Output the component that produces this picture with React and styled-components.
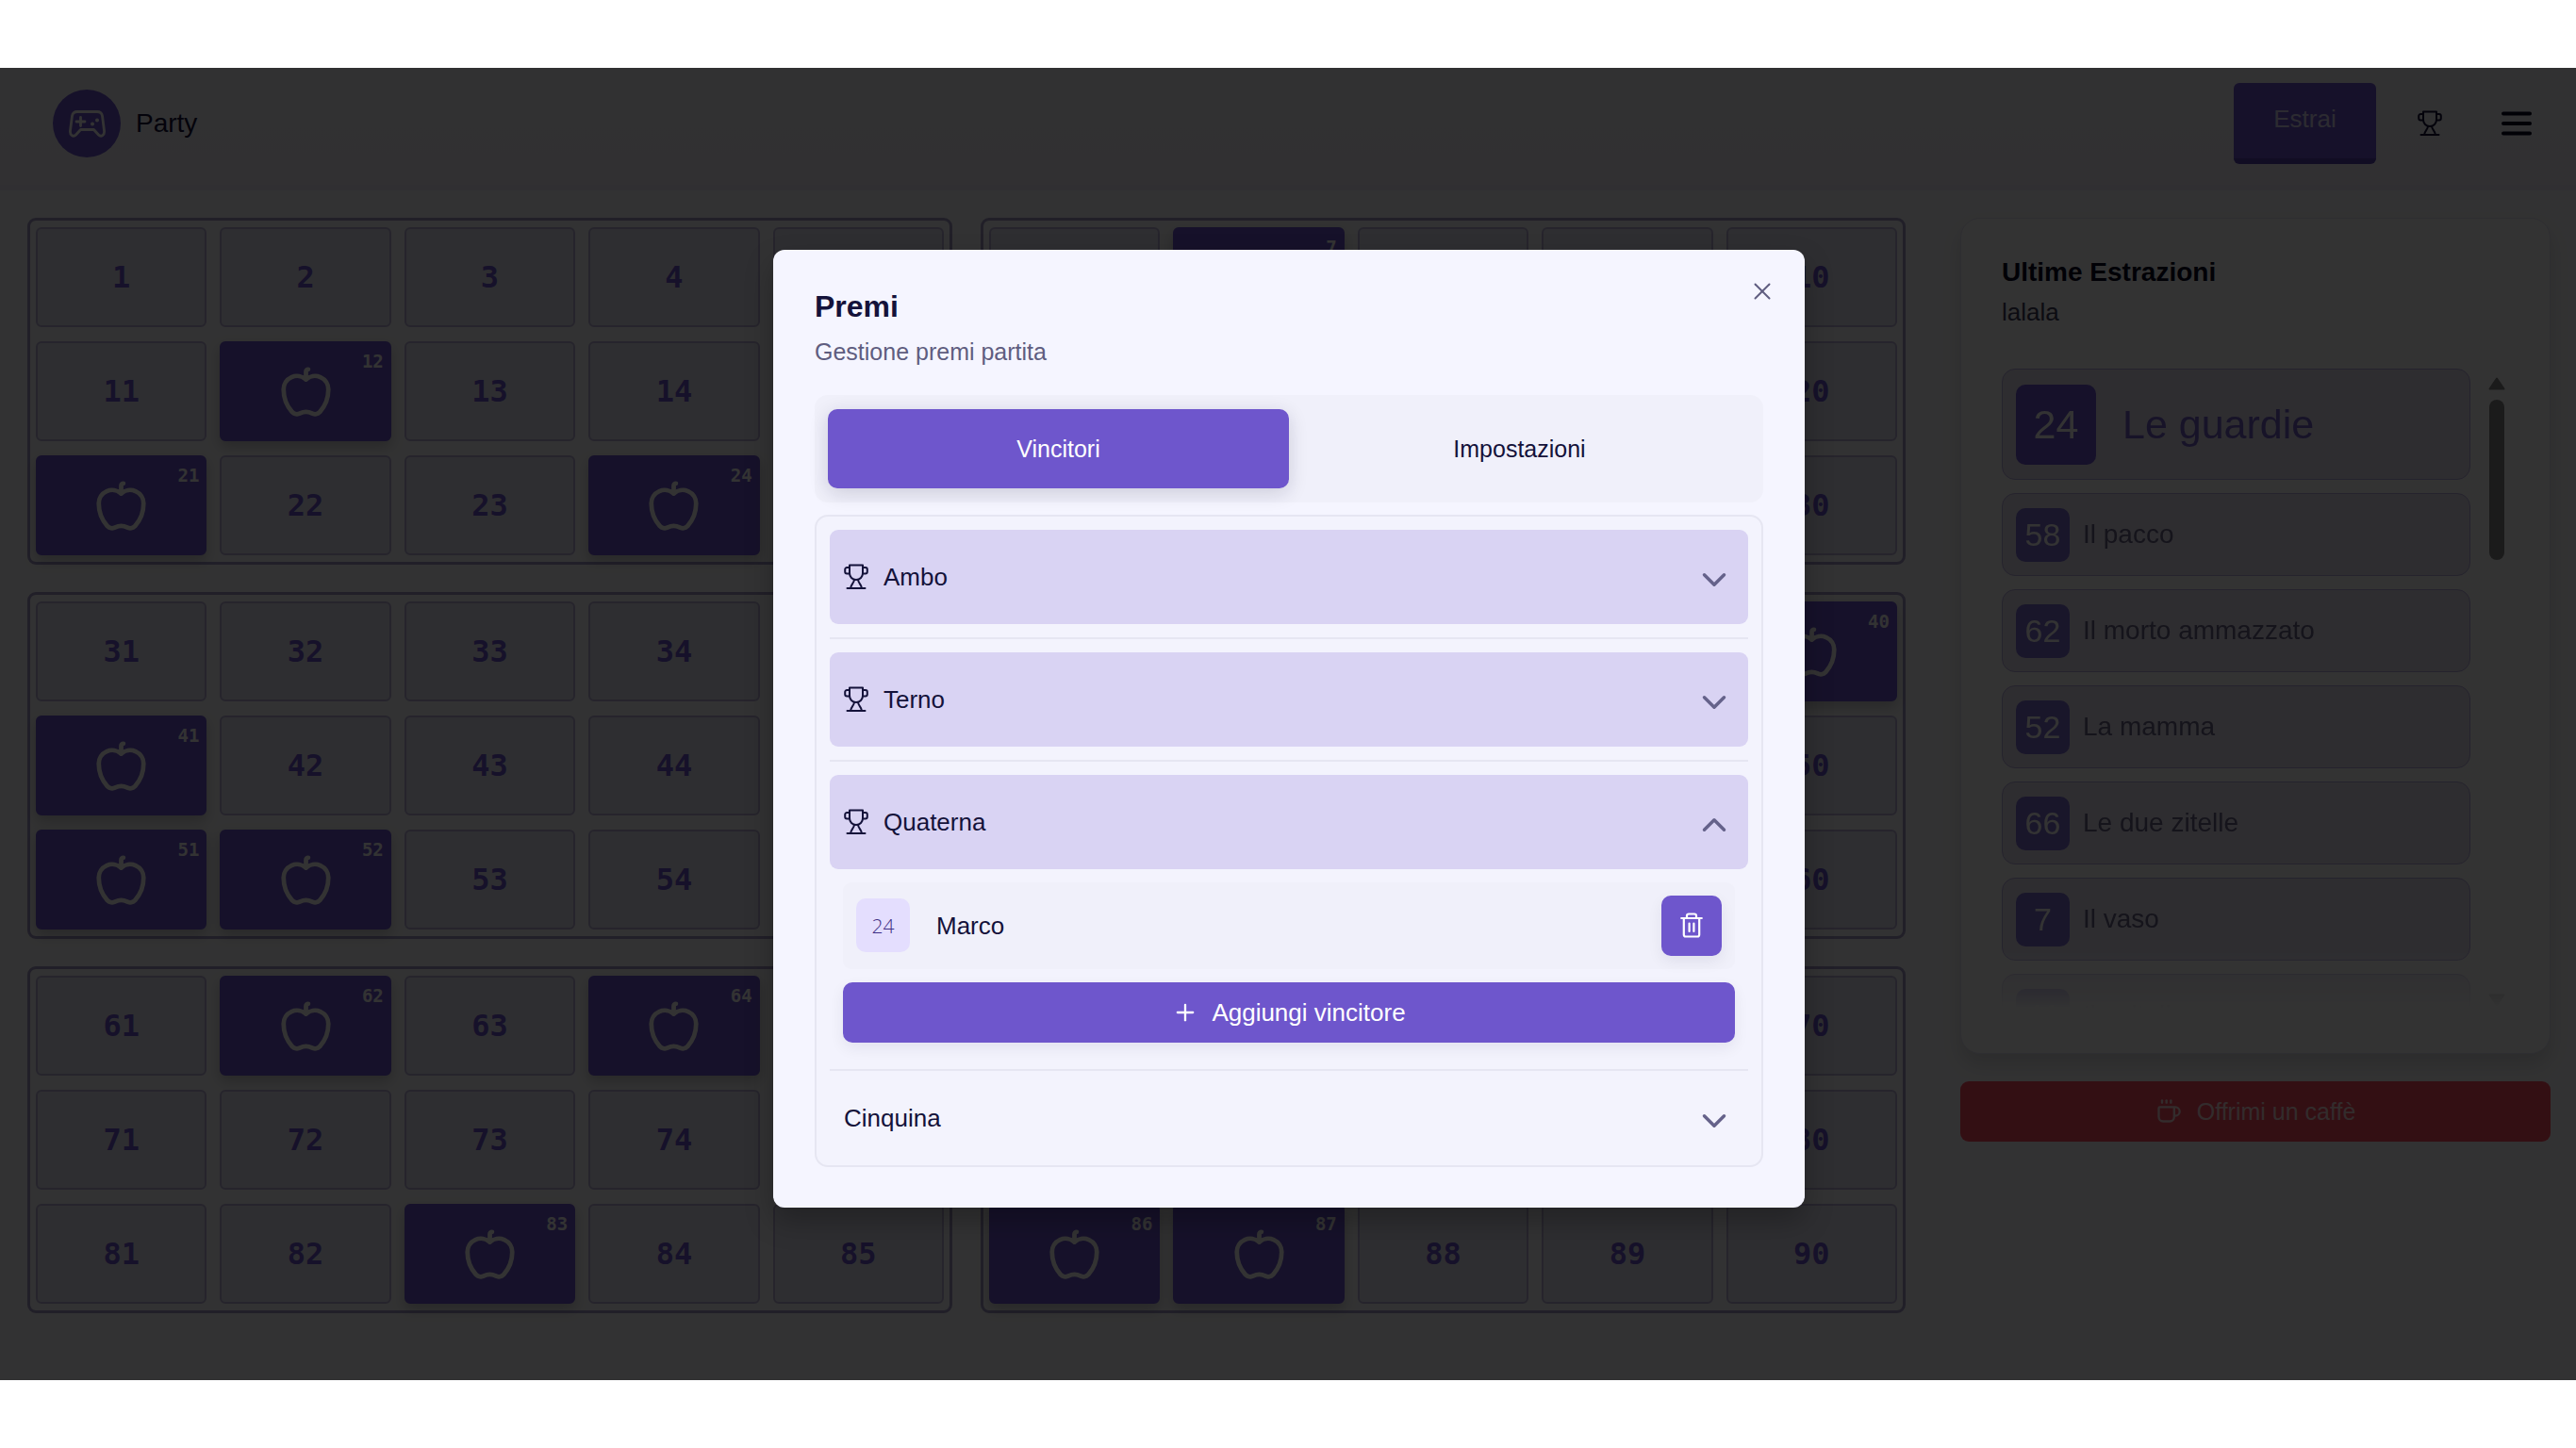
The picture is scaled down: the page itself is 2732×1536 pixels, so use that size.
import React from "react";
import styled, { createGlobalStyle, css } from "styled-components";
import { Apple, ChevronDown, ChevronUp, Coffee, Plus, X } from "lucide-react";

const GlobalStyle = createGlobalStyle`
  *, *::before, *::after { box-sizing: border-box; }
  body {
    margin: 0;
    background: #ffffff;
    color: #14123a;
    font-family: "Liberation Sans", Arial, sans-serif;
    font-size: 26px;
    line-height: 36px;
  }
  h1, h2, h3, p, ul { margin: 0; padding: 0; font-weight: 400; }
  ul { list-style: none; }
  button { font: inherit; color: inherit; border: 0; padding: 0; background: none; cursor: pointer; }
  svg { display: block; flex: none; }
`;

const Frame = styled.div`
  min-height: 100vh;
  padding: 72px 0;
  display: flex;
  flex-direction: column;
`;

const Stage = styled.div`
  position: relative;
  flex: 1;
  background: #fafafc;
`;

const Header = styled.header`
  height: 130px;
  padding: 0 14px 6px 56px;
  display: flex;
  align-items: center;
  justify-content: space-between;
  background: linear-gradient(#f5f4fa, #f2f0fa);
  border-bottom: 6px solid #eeecf8;
`;

const Brand = styled.a`
  display: flex;
  align-items: center;
  gap: 16px;
  font-size: 28px;
  color: #14123a;
  text-decoration: none;
`;

const Logo = styled.span`
  width: 72px;
  height: 72px;
  border-radius: 50%;
  display: grid;
  place-items: center;
  background: #6e56cf;
  color: #ffffff;
`;

const HeaderActions = styled.div`
  display: flex;
  align-items: center;
`;

const DrawButton = styled.button`
  width: 151px;
  height: 86px;
  padding-bottom: 4px;
  margin-right: 14px;
  border-radius: 6px;
  border-bottom: 6px solid #5843ad;
  background: #6e56cf;
  color: #dcd6f5;
`;

const IconButton = styled.button`
  width: ${(p) => p.$width};
  height: 86px;
  border-radius: 11px;
  display: grid;
  place-items: center;
  color: ${(p) => p.$color};
`;

const Main = styled.main`
  padding: 29px 27px 0 29px;
  display: grid;
  grid-template-columns: minmax(0, 1992fr) minmax(0, 626fr);
  gap: 58px;
  align-items: start;
`;

const Board = styled.div`
  display: grid;
  grid-template-columns: 1fr 1fr;
  gap: 29px 30px;
`;

const Card = styled.div`
  padding: 7px 6px;
  border: 3px solid #a39bc8;
  border-radius: 9px;
  display: grid;
  grid-template-columns: repeat(5, minmax(0, 1fr));
  gap: 15px 14px;
`;

const Cell = styled.div`
  position: relative;
  height: 106px;
  border: 2px solid #bcb4dc;
  border-radius: 6px;
  display: grid;
  place-items: center;
  background: #e7e4f2;
  color: #6e56cf;
  font: bold 32px/36px "DejaVu Sans Mono", monospace;
  ${(p) =>
    p.$called &&
    css`
      border-color: #6e56cf;
      background: #6e56cf;
      color: #ffffff;
      box-shadow: 0 6px 14px rgba(0, 0, 0, 0.2);
    `}
`;

const CellTag = styled.span`
  position: absolute;
  top: 8px;
  right: 6px;
  font-size: 19px;
  line-height: 22px;
`;

const Side = styled.aside`
  display: grid;
  gap: 29px;
`;

const Panel = styled.section`
  padding: 41px 43px 43px;
  border: 1px solid #e6e3f5;
  border-radius: 21px;
  background: #ffffff;
  box-shadow: 0 12px 20px rgba(0, 0, 0, 0.12);
`;

const PanelTitle = styled.h2`
  font-size: 28px;
  font-weight: 700;
  line-height: 32px;
  color: #05051e;
`;

const PanelText = styled.p`
  margin: 8px 0 42px;
  color: #3f3d5c;
`;

const ScrollPane = styled.div`
  height: 683px;
  overflow: hidden;
  display: flex;
  justify-content: space-between;
  mask-image: linear-gradient(#000 calc(100% - 70px), transparent calc(100% - 4px));
`;

const DrawList = styled.ul`
  flex: 1;
  margin-right: 19px;
`;

const DrawItem = styled.li`
  height: ${(p) => (p.$latest ? "118px" : "88px")};
  margin-bottom: 14px;
  padding: 0 14px;
  border: 1px solid #b9addf;
  border-radius: 14px;
  display: flex;
  align-items: center;
  gap: ${(p) => (p.$latest ? "28px" : "14px")};
  background: #e3dff0;
  color: ${(p) => (p.$latest ? "#7560c8" : "#6a6387")};
  font-size: ${(p) => (p.$latest ? "43px" : "28px")};
`;

const DrawBadge = styled.span`
  width: ${(p) => (p.$latest ? "85px" : "57px")};
  height: ${(p) => (p.$latest ? "85px" : "57px")};
  border-radius: 10px;
  display: grid;
  place-items: center;
  background: ${(p) => (p.$latest ? "#6e56cf" : "#7f6fd2")};
  color: #ffffff;
  font-size: ${(p) => (p.$latest ? "43px" : "34px")};
`;

const ScrollBar = styled.div`
  width: 18px;
  margin-right: 4px;
  padding: 9px 0 6px;
  display: flex;
  flex-direction: column;
  align-items: center;
  color: #868686;
`;

const Thumb = styled.div`
  width: 16px;
  height: 170px;
  margin: 10px 0 auto;
  border-radius: 8px;
  background: #868686;
`;

const CoffeeButton = styled.button`
  height: 64px;
  border-radius: 9px;
  display: flex;
  align-items: center;
  justify-content: center;
  gap: 16px;
  background: #ff4b62;
  color: #ffd9dd;
  font-size: 25px;
`;

const Overlay = styled.div`
  position: absolute;
  inset: 0;
  padding: 9px 0 0 2px;
  display: flex;
  align-items: center;
  justify-content: center;
  background: rgba(0, 0, 0, 0.8);
`;

const Dialog = styled.div`
  position: relative;
  width: 1094px;
  max-width: 94%;
  padding: 44px 44px 43px;
  border-radius: 12px;
  background: #f5f5ff;
  box-shadow: 0 14px 30px rgba(0, 0, 0, 0.25);
`;

const CloseButton = styled.button`
  position: absolute;
  top: 29px;
  right: 30px;
  width: 30px;
  height: 30px;
  color: #5f5d80;
`;

const DialogTitle = styled.h1`
  font-size: 32px;
  font-weight: 700;
  line-height: 32px;
`;

const DialogText = styled.p`
  margin: 14px 0 28px;
  color: #5f5d80;
  font-size: 25px;
`;

const Tabs = styled.div`
  padding: 15px 14px;
  border-radius: 14px;
  display: grid;
  grid-template-columns: 1fr 1fr;
  background: #f0f0fa;
`;

const Tab = styled.button`
  height: 84px;
  border-radius: 10px;
  font-size: 25px;
  ${(p) =>
    p.$active &&
    css`
      background: #6e56cc;
      color: #ffffff;
      box-shadow: 0 5px 20px rgba(20, 18, 58, 0.16);
    `}
`;

const Prizes = styled.div`
  margin-top: 13px;
  padding: 0 14px;
  border: 2px solid #e6e6f2;
  border-radius: 14px;
  background: #f3f3fd;
`;

const Prize = styled.section`
  & + & { border-top: 2px solid #e6e6f2; }
`;

const PrizeHeading = styled.h3`
  padding: ${(p) => (p.$won ? "14px 0" : "0")};
  font-size: 26px;
`;

const PrizeToggle = styled.button`
  width: 100%;
  height: 100px;
  padding: 0 15px;
  border-radius: 9px;
  display: flex;
  align-items: center;
  gap: 16px;
  background: ${(p) => (p.$won ? "#d9d3f3" : "transparent")};
`;

const Chevron = styled.span`
  margin-left: auto;
  padding-top: 6px;
  color: #65628a;
`;

const Winners = styled.div`
  padding: 0 14px 28px;
  display: grid;
  gap: 14px;
`;

const Winner = styled.div`
  height: 92px;
  padding: 0 14px;
  border-radius: 9px;
  display: flex;
  align-items: center;
  background: #f0f0fa;
`;

const WinnerBadge = styled.span`
  width: 57px;
  height: 57px;
  margin-right: 28px;
  border-radius: 10px;
  display: grid;
  place-items: center;
  background: #e4defe;
  color: #3f2f86;
  font: 300 21px/28px "Open Sans", sans-serif;
`;

const primary = css`
  height: 64px;
  border-radius: 10px;
  display: flex;
  align-items: center;
  justify-content: center;
  background: #6e56cc;
  color: #ffffff;
  box-shadow: 0 6px 16px rgba(20, 18, 58, 0.07);
`;

const DeleteButton = styled.button`
  ${primary}
  width: 64px;
  margin-left: auto;
`;

const AddButton = styled.button`
  ${primary}
  gap: 14px;
`;

const Trophy = () => (
  <svg width="26" height="28" viewBox="0 0 26 28" fill="none" stroke="currentColor" strokeWidth="2" strokeLinecap="round" strokeLinejoin="round" aria-hidden="true">
    <path d="M6 1.5h14v8.5c0 4-3 7-7 7s-7-3-7-7z" />
    <path d="M6 4H3.2a2 2 0 0 0-2 2v2.500a2 2 0 0 0 2 2H6M20 4h2.800a2 2 0 0 1 2 2v2.500a2 2 0 0 1-2 2H20" />
    <path d="M11 17c-.3 3.600-3.700 5.300-4 9M15 17c.3 3.600 3.700 5.300 4 9M3.500 26h19" />
  </svg>
);

const Gamepad = () => (
  <svg width="39" height="29" viewBox="0 0 39 29" fill="none" stroke="currentColor" strokeWidth="2.8" strokeLinecap="round" strokeLinejoin="round" aria-hidden="true">
    <path d="M9 1.500h21c3 0 5 1.500 5.500 4.500l2 15.500c.6 5-3.200 7.300-6 4.500L26.500 20.500h-14L7.500 26c-2.800 2.800-6.600.5-6-4.500L3.500 6C4 3 6 1.500 9 1.500z" />
    <path d="M12.500 7.500v9M8 12h9" />
    <path d="M25 14.500h.01M30 10.500h.01" strokeWidth="4" />
  </svg>
);

const Bin = () => (
  <svg width="24" height="27" viewBox="0 0 24 27" fill="none" stroke="currentColor" strokeWidth="2.200" strokeLinecap="round" strokeLinejoin="round" aria-hidden="true">
    <path d="M1.200 6h21.600M7 6V3.500a2 2 0 0 1 2-2h6a2 2 0 0 1 2 2V6M3.800 6v17.500a2 2 0 0 0 2 2h12.400a2 2 0 0 0 2-2V6M9.600 11.500v8.500M14.400 11.500v8.500" />
  </svg>
);

const Bars = () => (
  <svg width="34" height="28" viewBox="0 0 34 28" fill="none" stroke="currentColor" strokeWidth="4" strokeLinecap="round" aria-hidden="true">
    <path d="M3 3.500h28M3 14h28M3 24.500h28" />
  </svg>
);

const Arrow = ({ down }) => (
  <svg width="18" height="14" viewBox="0 0 18 14" fill="currentColor" stroke="currentColor" strokeWidth="2" strokeLinejoin="round" aria-hidden="true">
    <path d={down ? "M1.500 1.500h15L9 12.500z" : "M1.500 12.500h15L9 1.500z"} />
  </svg>
);

const CALLED = new Set([7, 12, 21, 24, 40, 41, 51, 52, 58, 62, 64, 66, 83, 86, 87]);

const CARDS = [1, 6, 31, 36, 61, 66].map((start) =>
  [0, 10, 20].flatMap((row) => [0, 1, 2, 3, 4].map((col) => start + row + col))
);

const DRAWS = [
  [24, "Le guardie"],
  [58, "Il pacco"],
  [62, "Il morto ammazzato"],
  [52, "La mamma"],
  [66, "Le due zitelle"],
  [7, "Il vaso"],
  [41, "Il coltello"],
];

const PRIZES = [
  { name: "Ambo", won: true },
  { name: "Terno", won: true },
  { name: "Quaterna", won: true, winners: [{ number: 24, name: "Marco" }] },
  { name: "Cinquina", won: false },
];

export default function App() {
  return (
    <>
      <GlobalStyle />
      <Frame>
        <Stage>
          <Header>
            <Brand href="#">
              <Logo><Gamepad /></Logo>
              Party
            </Brand>
            <HeaderActions>
              <DrawButton type="button">Estrai</DrawButton>
              <IconButton type="button" aria-label="Premi" $width="86px" $color="#14123a"><Trophy /></IconButton>
              <IconButton type="button" aria-label="Menu" $width="98px" $color="#05051e"><Bars /></IconButton>
            </HeaderActions>
          </Header>
          <Main>
            <Board>
              {CARDS.map((numbers) => (
                <Card key={numbers[0]}>
                  {numbers.map((n) => (
                    <Cell key={n} $called={CALLED.has(n)}>
                      {CALLED.has(n) ? (
                        <>
                          <Apple size={57} />
                          <CellTag>{n}</CellTag>
                        </>
                      ) : (
                        n
                      )}
                    </Cell>
                  ))}
                </Card>
              ))}
            </Board>
            <Side>
              <Panel>
                <PanelTitle>Ultime Estrazioni</PanelTitle>
                <PanelText>lalala</PanelText>
                <ScrollPane>
                  <DrawList>
                    {DRAWS.map(([number, name], i) => (
                      <DrawItem key={number} $latest={i === 0}>
                        <DrawBadge $latest={i === 0}>{number}</DrawBadge>
                        {name}
                      </DrawItem>
                    ))}
                  </DrawList>
                  <ScrollBar>
                    <Arrow />
                    <Thumb />
                    <Arrow down />
                  </ScrollBar>
                </ScrollPane>
              </Panel>
              <CoffeeButton type="button">
                <Coffee size={28} />
                Offrimi un caffè
              </CoffeeButton>
            </Side>
          </Main>
          <Overlay>
            <Dialog role="dialog" aria-modal="true" aria-labelledby="prizes-title">
              <DialogTitle id="prizes-title">Premi</DialogTitle>
              <DialogText>Gestione premi partita</DialogText>
              <CloseButton type="button" aria-label="Chiudi"><X size={30} strokeWidth={1.6} /></CloseButton>
              <Tabs role="tablist">
                <Tab type="button" role="tab" aria-selected="true" $active>Vincitori</Tab>
                <Tab type="button" role="tab" aria-selected="false">Impostazioni</Tab>
              </Tabs>
              <Prizes role="tabpanel">
                {PRIZES.map(({ name, won, winners }) => (
                  <Prize key={name}>
                    <PrizeHeading $won={won}>
                      <PrizeToggle type="button" aria-expanded={Boolean(winners)} $won={won}>
                        {won && <Trophy />}
                        {name}
                        <Chevron>{winners ? <ChevronUp size={42} /> : <ChevronDown size={42} />}</Chevron>
                      </PrizeToggle>
                    </PrizeHeading>
                    {winners && (
                      <Winners>
                        {winners.map((w) => (
                          <Winner key={w.name}>
                            <WinnerBadge>{w.number}</WinnerBadge>
                            {w.name}
                            <DeleteButton type="button" aria-label="Elimina"><Bin /></DeleteButton>
                          </Winner>
                        ))}
                        <AddButton type="button">
                          <Plus size={28} />
                          Aggiungi vincitore
                        </AddButton>
                      </Winners>
                    )}
                  </Prize>
                ))}
              </Prizes>
            </Dialog>
          </Overlay>
        </Stage>
      </Frame>
    </>
  );
}
